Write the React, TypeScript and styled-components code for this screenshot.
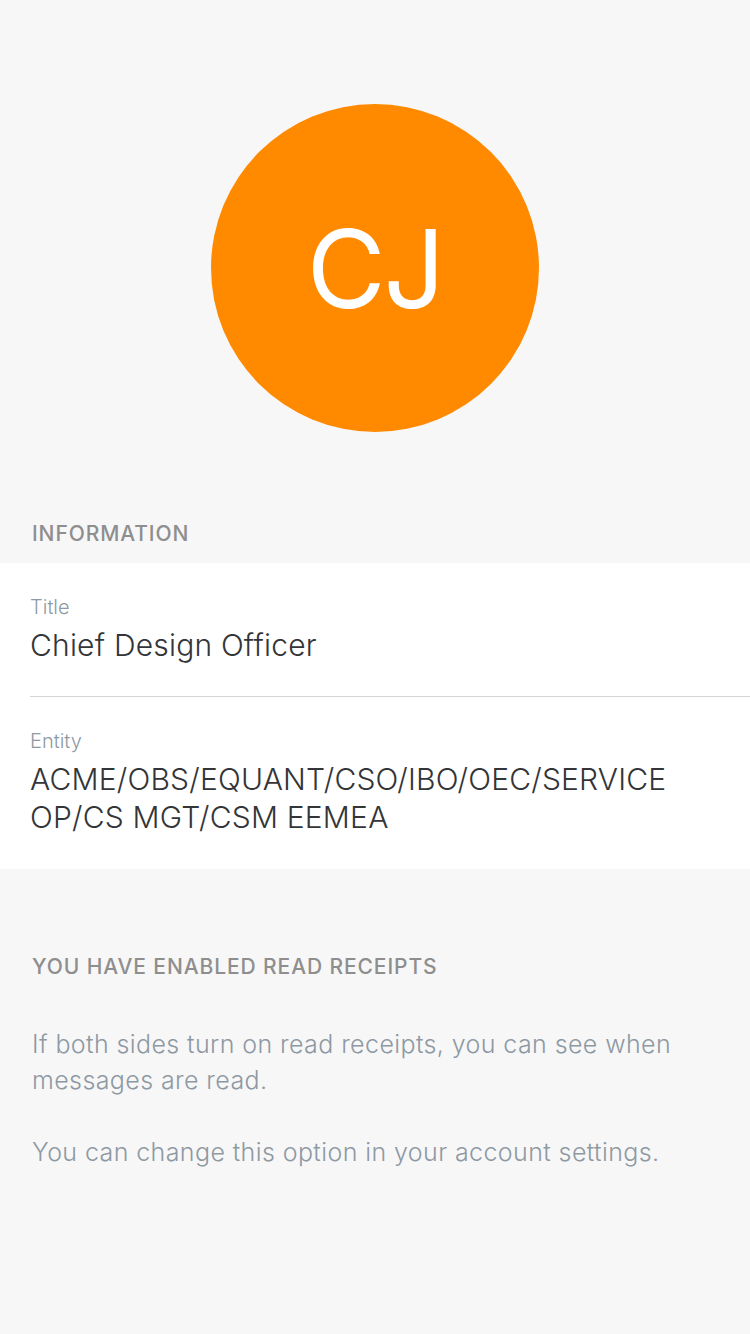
import React from "react";
import styled, { createGlobalStyle } from "styled-components";

const GlobalStyle = createGlobalStyle`
  html, body {
    margin: 0;
    padding: 0;
    background: #f7f7f7;
  }
  body {
    font-family: Inter, "Liberation Sans", sans-serif;
    -webkit-font-smoothing: antialiased;
  }
`;

const Page = styled.div`
  min-height: 1334px;
  background: #f7f7f7;
  display: flex;
  flex-direction: column;
`;

const AvatarWrap = styled.div`
  display: flex;
  justify-content: center;
  padding-top: 104px;
`;

const Avatar = styled.div`
  width: 328px;
  height: 328px;
  border-radius: 50%;
  background: #ff8a00;
  color: #fff;
  display: flex;
  align-items: center;
  justify-content: center;
  font-size: 108px;
  font-weight: 400;
  letter-spacing: -2px;
`;

const SectionTitle = styled.div<{ $top: number; $bottom: number }>`
  padding: ${(p) => p.$top}px 32px ${(p) => p.$bottom}px;
  font-size: 21px;
  line-height: 24px;
  font-weight: 500;
  color: #8e8e8e;
  letter-spacing: 0.9px;
`;

const Card = styled.div`
  background: #fff;
  padding-left: 30px;
`;

const Field = styled.div<{ $last?: boolean }>`
  padding: 32px 30px ${(p) => (p.$last ? 33 : 32)}px 0;
  border-bottom: ${(p) => (p.$last ? "none" : "1px solid #d2d5d8")};
`;

const Label = styled.div`
  font-size: 20px;
  line-height: 24px;
  font-weight: 300;
  color: #8e99a3;
  margin-bottom: 7px;
`;

const Value = styled.div`
  font-size: 30px;
  line-height: 38px;
  font-weight: 300;
  color: #333538;
  letter-spacing: 0.2px;
`;

const Note = styled.p`
  margin: 0 32px 36px;
  font-size: 25px;
  line-height: 36px;
  font-weight: 300;
  color: #8e99a3;
  letter-spacing: 0.4px;
`;

export default function App() {
  return (
    <Page>
      <GlobalStyle />
      <AvatarWrap>
        <Avatar>CJ</Avatar>
      </AvatarWrap>
      <SectionTitle $top={90} $bottom={17}>
        INFORMATION
      </SectionTitle>
      <Card>
        <Field>
          <Label>Title</Label>
          <Value>Chief Design Officer</Value>
        </Field>
        <Field $last>
          <Label>Entity</Label>
          <Value>
            ACME/OBS/EQUANT/CSO/IBO/OEC/SERVICE
            <br />
            OP/CS MGT/CSM EEMEA
          </Value>
        </Field>
      </Card>
      <SectionTitle $top={86} $bottom={47}>
        YOU HAVE ENABLED READ RECEIPTS
      </SectionTitle>
      <Note>If both sides turn on read receipts, you can see when messages are read.</Note>
      <Note>You can change this option in your account settings.</Note>
    </Page>
  );
}
